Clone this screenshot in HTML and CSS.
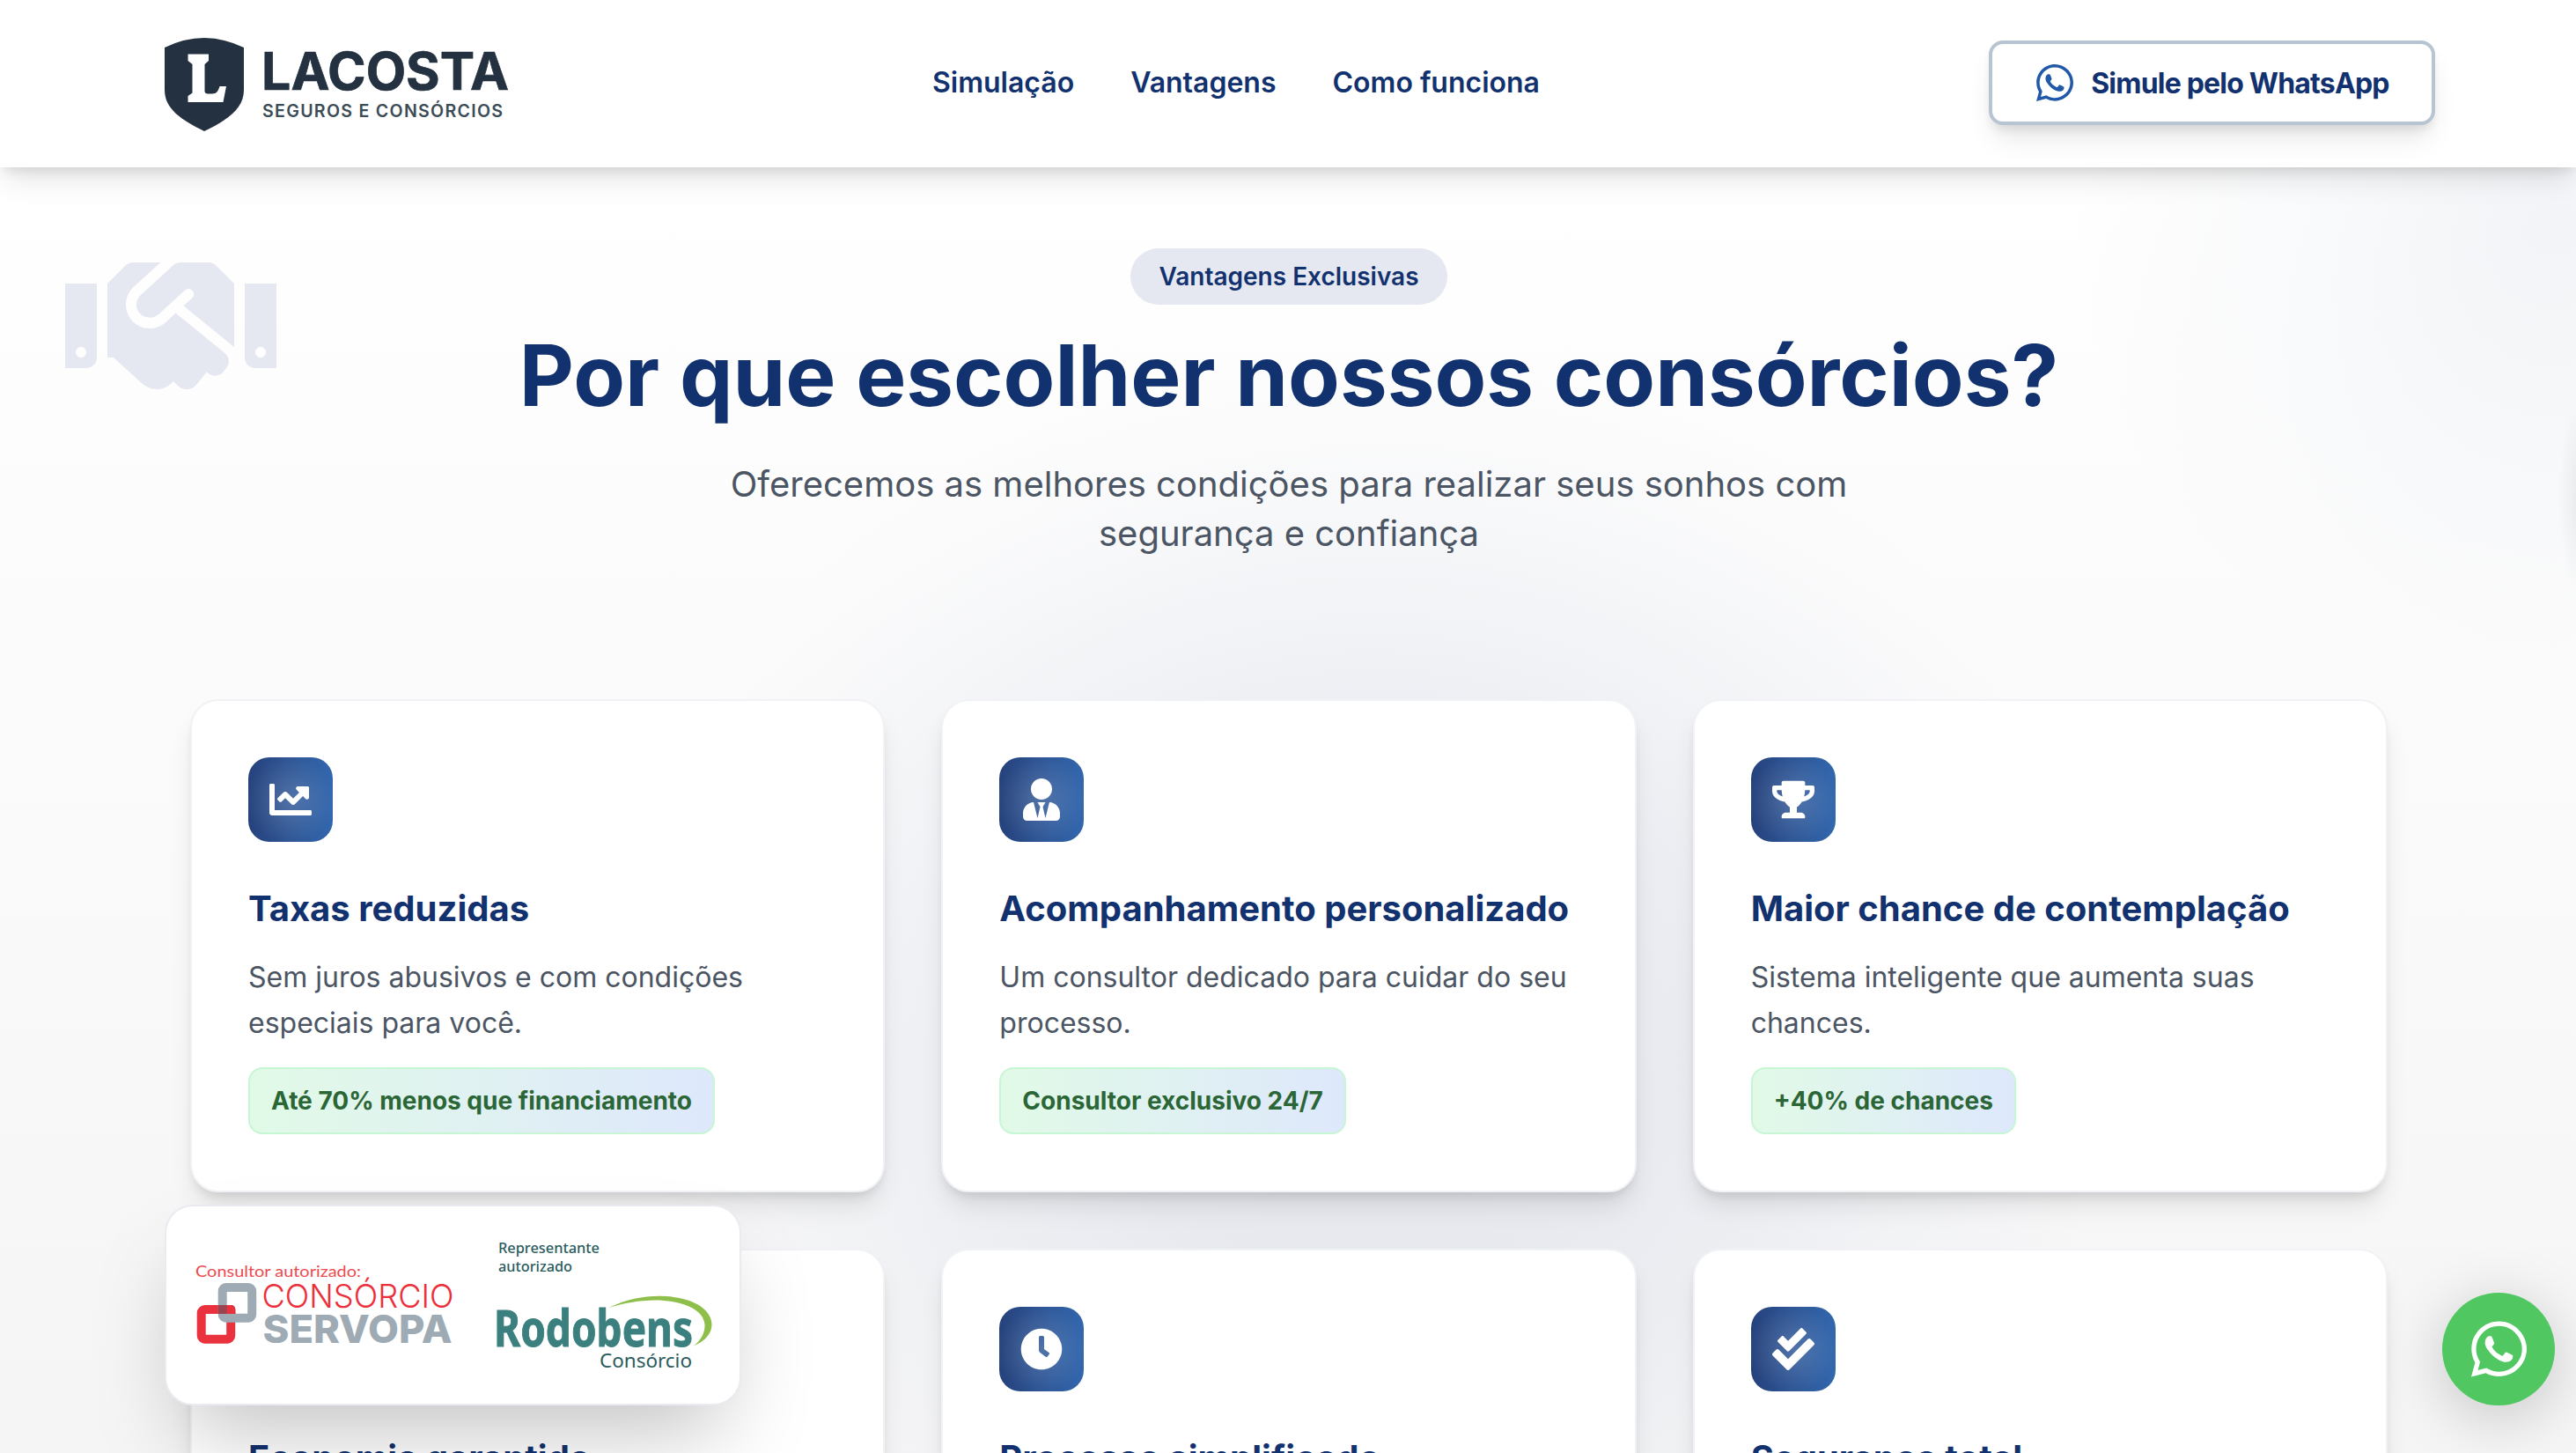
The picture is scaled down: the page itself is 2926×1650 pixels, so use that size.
FILE: index.html
```
<!DOCTYPE html>
<html lang="pt-BR">
<head>
<meta charset="utf-8">
<title>Lacosta Seguros e Consórcios</title>
<link rel="stylesheet" href="styles.css">
</head>
<body>
<svg class="sprite" aria-hidden="true">
  <symbol id="whatsapp" viewBox="0 0 448 512"><path d="M380.9 97.1C339 55.1 283.2 32 223.9 32c-122.4 0-222 99.6-222 222 0 39.1 10.2 77.3 29.6 111L0 480l117.7-30.9c32.4 17.7 68.9 27 106.1 27h.1c122.3 0 224.1-99.6 224.1-222 0-59.3-25.2-115-67.1-157zm-157 341.6c-33.2 0-65.7-8.9-94-25.7l-6.7-4-69.8 18.3L72 359.2l-4.4-7c-18.5-29.4-28.2-63.3-28.2-98.2 0-101.7 82.8-184.5 184.6-184.5 49.3 0 95.6 19.2 130.4 54.1 34.8 34.9 56.2 81.2 56.1 130.5 0 101.8-84.9 184.6-186.6 184.6zm101.2-138.2c-5.5-2.8-32.8-16.2-37.9-18-5.1-1.9-8.8-2.8-12.5 2.8-3.7 5.6-14.3 18-17.6 21.8-3.2 3.7-6.5 4.2-12 1.4-32.6-16.3-54-29.1-75.5-66-5.7-9.8 5.7-9.1 16.3-30.3 1.8-3.7.9-6.9-.5-9.7-1.4-2.8-12.5-30.1-17.1-41.2-4.5-10.8-9.1-9.3-12.5-9.5-3.2-.2-6.9-.2-10.6-.2-3.7 0-9.7 1.4-14.8 6.9-5.1 5.6-19.4 19-19.4 46.3 0 27.3 19.9 53.7 22.6 57.4 2.8 3.7 39.1 59.7 94.8 83.8 35.2 15.2 49 16.5 66.6 13.9 10.7-1.6 32.8-13.4 37.4-26.4 4.6-13 4.6-24.1 3.2-26.4-1.3-2.5-5-3.9-10.5-6.6z"/></symbol>
</svg>

<header class="header">
  <a class="logo">
    <svg class="logo-art" width="420" height="110" viewBox="160 40 420 110">
      <path d="M187 54Q232 32 277 54V102C277 124 258 136 232 149C206 136 187 124 187 102Z" fill="#233141"/>
      <path d="M213.500 61.500H237V69L232.500 73V103.500C232.500 105.500 234 106.500 236 106.500H241C246 106.500 248 103 249.500 98H257L253.500 116H213.500V109L218.500 105.500V73L213.500 69Z" fill="#fff"/>
      <text class="logo-name" x="297" y="101.700" textLength="281" lengthAdjust="spacingAndGlyphs">LACOSTA</text>
      <text class="logo-tag" x="298" y="132.600" textLength="273">SEGUROS E CONSÓRCIOS</text>
    </svg>
  </a>
  <nav class="nav"><a>Simulação</a><a>Vantagens</a><a>Como funciona</a></nav>
  <a class="cta"><svg width="42" height="48"><use href="#whatsapp"/></svg><span>Simule pelo WhatsApp</span></a>
</header>

<main class="section">
  <svg class="handshake" width="240" height="192" viewBox="0 0 640 512"><path d="M434.700 64h-85.900c-8 0-15.700 3-21.600 8.400l-98.300 90c-.1.1-.2.3-.3.4-16.600 15.600-16.300 40.500-2.100 56 12.700 13.900 39.400 17.600 56.100 2.700.1-.1.3-.1.4-.2l79.900-73.200c6.500-5.900 16.700-5.500 22.600 1 6 6.500 5.500 16.600-1 22.600l-26.100 23.900L504 313.800c2.900 2.400 5.500 5 7.900 7.700V128l-54.600-54.600c-5.900-6-14.100-9.400-22.600-9.400zM544 128.200v223.900c0 17.700 14.300 32 32 32h64V128.200h-96zm48 223.900c-8.800 0-16-7.200-16-16s7.200-16 16-16 16 7.200 16 16-7.200 16-16 16zM0 384h64c17.700 0 32-14.300 32-32V128.200H0V384zm48-63.900c8.800 0 16 7.200 16 16s-7.200 16-16 16-16-7.200-16-16c0-8.900 7.200-16 16-16zm435.900 18.600L334.600 217.500l-30 27.500c-29.700 27.100-75.200 24.500-101.700-4.400-26.900-29.400-24.800-74.900 4.400-101.700L289.100 64h-83.800c-8.500 0-16.600 3.400-22.600 9.400L128 128v223.900h18.300l90.500 81.900c27.400 22.300 67.700 18.100 90-9.300l.2-.2 17.900 15.500c15.900 13 39.400 10.500 52.300-5.400l31.400-38.600 5.400 4.400c13.700 11.100 33.900 9.100 45-4.700l9.500-11.700c11.200-13.800 9.100-33.900-4.600-45.100z"/></svg>

  <div class="intro">
    <span class="pill">Vantagens Exclusivas</span>
    <h1>Por que escolher nossos consórcios?</h1>
    <p>Oferecemos as melhores condições para realizar seus sonhos com segurança e confiança</p>
  </div>

  <div class="grid">
    <article class="card">
      <div class="icon"><svg viewBox="0 0 512 512"><path d="M496 384H64V80c0-8.840-7.160-16-16-16H16C7.160 64 0 71.160 0 80v336c0 17.670 14.330 32 32 32h464c8.840 0 16-7.160 16-16v-32c0-8.840-7.160-16-16-16zM464 96H345.940c-21.380 0-32.090 25.850-16.970 40.970l32.400 32.400L288 242.750l-73.370-73.370c-12.500-12.500-32.760-12.500-45.250 0l-68.690 68.690c-6.250 6.250-6.250 16.380 0 22.630l22.620 22.620c6.250 6.250 16.380 6.250 22.630 0L192 237.250l73.370 73.370c12.500 12.500 32.760 12.500 45.250 0l96-96 32.400 32.400c15.120 15.120 40.970 4.410 40.970-16.970V112c.01-8.840-7.150-16-15.990-16z"/></svg></div>
      <h2>Taxas reduzidas</h2>
      <p>Sem juros abusivos e com condições especiais para você.</p>
      <span class="tag">Até 70% menos que financiamento</span>
    </article>
    <article class="card">
      <div class="icon"><svg viewBox="0 0 448 512"><path d="M224 256c70.700 0 128-57.300 128-128S294.700 0 224 0 96 57.300 96 128s57.300 128 128 128zm95.800 32.600L272 480l-32-136 32-56h-96l32 56-32 136-47.800-191.400C56.900 292 0 350.300 0 422.400V464c0 26.500 21.500 48 48 48h352c26.500 0 48-21.500 48-48v-41.600c0-72.100-56.900-130.400-128.200-133.800z"/></svg></div>
      <h2>Acompanhamento personalizado</h2>
      <p>Um consultor dedicado para cuidar do seu processo.</p>
      <span class="tag">Consultor exclusivo 24/7</span>
    </article>
    <article class="card">
      <div class="icon"><svg viewBox="0 0 576 512"><path d="M552 64H448V24c0-13.300-10.700-24-24-24H152c-13.300 0-24 10.700-24 24v40H24C10.700 64 0 74.700 0 88v56c0 35.700 22.500 72.400 61.900 100.700 31.500 22.700 69.800 37.100 110 41.700C203.300 338.500 240 360 240 360v72h-48c-35.300 0-64 20.700-64 56v12c0 6.600 5.400 12 12 12h296c6.600 0 12-5.400 12-12v-12c0-35.300-28.700-56-64-56h-48v-72s36.700-21.500 68.100-73.600c40.300-4.600 78.600-19 110-41.700 39.300-28.300 61.900-65 61.900-100.700V88c0-13.300-10.700-24-24-24zM99.300 192.800C74.900 175.200 64 155.600 64 144v-16h64.200c1 32.600 5.800 61.200 12.800 86.200-15.100-5.200-29.200-12.400-41.700-21.400zM512 144c0 16.100-17.700 36.100-35.300 48.800-12.500 9-26.700 16.200-41.800 21.400 7-25 11.800-53.600 12.800-86.200H512v16z"/></svg></div>
      <h2>Maior chance de contemplação</h2>
      <p>Sistema inteligente que aumenta suas chances.</p>
      <span class="tag">+40% de chances</span>
    </article>
    <article class="card">
      <div class="icon"></div>
      <h2>Economia garantida</h2>
    </article>
    <article class="card">
      <div class="icon"><svg viewBox="0 0 512 512"><path d="M256,8C119,8,8,119,8,256S119,504,256,504,504,393,504,256,393,8,256,8Zm92.490,313h0l-20,25a16,16,0,0,1-22.490,2.500h0l-67-49.720a40,40,0,0,1-15-31.230V112a16,16,0,0,1,16-16h32a16,16,0,0,1,16,16V256l58,42.500A16,16,0,0,1,348.490,321Z"/></svg></div>
      <h2>Processo simplificado</h2>
    </article>
    <article class="card">
      <div class="icon"><svg viewBox="0 0 512 512"><path d="M505 174.800l-39.600-39.600c-9.400-9.400-24.600-9.400-33.900 0L192 374.700 80.600 263.200c-9.400-9.400-24.600-9.400-33.900 0L7 302.900c-9.400 9.400-9.400 24.600 0 34L175 505c9.400 9.400 24.600 9.400 33.900 0l296-296.200c9.400-9.500 9.400-24.700.1-34zm-324.300 106c6.200 6.300 16.400 6.300 22.600 0l208-208.200c6.200-6.300 6.200-16.400 0-22.600L366.100 4.700c-6.200-6.300-16.400-6.300-22.600 0L192 156.200l-55.400-55.500c-6.200-6.300-16.400-6.300-22.600 0L68.700 146c-6.200 6.300-6.200 16.400 0 22.600l112 112.200z"/></svg></div>
      <h2>Segurança total</h2>
    </article>
  </div>
</main>

<aside class="partners">
  <svg width="294" height="100" viewBox="222 1432 294 100">
    <text class="sv-note" x="222" y="1449.500" textLength="188" lengthAdjust="spacingAndGlyphs">Consultor autorizado:</text>
    <text class="sv-top" x="297.500" y="1485" textLength="218" lengthAdjust="spacingAndGlyphs">CONSÓRCIO</text>
    <text class="sv-name" x="298.500" y="1525" textLength="215" lengthAdjust="spacingAndGlyphs">SERVOPA</text>
    <rect x="228.700" y="1487" width="33.500" height="33.700" rx="4" fill="none" stroke="#e9323d" stroke-width="10"/>
    <rect x="252.700" y="1462" width="33.500" height="34.700" rx="4" fill="none" stroke="#9eabb4" stroke-width="10"/>
    <path d="M247.700 1482H262Q267.300 1482 267.300 1487.500V1492H247.700Z" fill="#9c4350"/>
    <path d="M257.700 1482H262Q267.300 1482 267.300 1487.500V1492H257.700Z" fill="#e9323d"/>
  </svg>
  <svg width="248" height="156" viewBox="563 1404 248 156">
    <text class="ro-note" x="566" y="1422.700" textLength="115" lengthAdjust="spacingAndGlyphs">Representante</text>
    <text class="ro-note" x="566" y="1443.700" textLength="84" lengthAdjust="spacingAndGlyphs">autorizado</text>
    <text class="ro-name" x="561" y="1529" textLength="226" lengthAdjust="spacingAndGlyphs">Rodobens</text>
    <text class="ro-sub" x="681" y="1553" textLength="105" lengthAdjust="spacingAndGlyphs">Consórcio</text>
    <path d="M691.500 1485C712 1475 732 1471.500 750 1471.700C782 1472 808 1484 808.500 1504C808.500 1515 800 1523 788 1528.500C796 1522 801 1514 800.500 1504C799 1486 773 1476.500 744 1476.500C726 1476.500 708 1480 691.500 1485Z" fill="#8fbf4b"/>
  </svg>
</aside>

<a class="float"><svg width="63" height="72"><use href="#whatsapp"/></svg></a>
</body>
</html>
```
FILE: styles.css
```
* { box-sizing: border-box; margin: 0; padding: 0; }

html { overflow: hidden; }

body {
  height: 1650px;
  overflow: hidden;
  position: relative;
  font-family: Inter, "Liberation Sans", sans-serif;
  color: #12316f;
  background: #fff;
}

svg { fill: currentColor; flex: none; }
.sprite { position: absolute; width: 0; height: 0; }

.header {
  position: relative;
  z-index: 5;
  height: 190px;
  padding: 0 160px 2px;
  display: flex;
  align-items: center;
  justify-content: space-between;
  background: #fff;
  box-shadow: 0 20px 30px -6px rgba(0, 0, 0, .1), 0 8px 12px -4px rgba(0, 0, 0, .1);
}
.logo { width: 389px; height: 108px; display: block; }
.logo-art { overflow: visible; display: block; }
.logo-name { font-size: 58.5px; font-weight: 700; fill: #233141; stroke: #233141; stroke-width: .7px; }
.logo-tag { font-size: 19.6px; font-weight: 600; fill: #3b4c57; }

.nav { display: flex; gap: 64px; font-size: 32px; line-height: 48px; font-weight: 600; }

.cta {
  width: 507px;
  height: 96px;
  padding-left: 2px;
  display: flex;
  align-items: center;
  justify-content: center;
  gap: 20px;
  border: 4px solid #b7c4d2;
  border-radius: 16px;
  background: #fff;
  font-size: 32px;
  font-weight: 700;
  letter-spacing: -.8px;
  box-shadow: 0 20px 30px -6px rgba(0, 0, 0, .1), 0 8px 12px -4px rgba(0, 0, 0, .1);
}
.cta svg { color: #2159a8; }

.section {
  position: relative;
  height: 1460px;
  overflow: hidden;
  padding: 92px 214px 0 216px;
  background:
    radial-gradient(ellipse 26px 110px at 2932px 375px, rgba(60, 70, 90, .09), transparent),
    radial-gradient(circle 560px at 2900px 60px, rgba(30, 65, 120, .055), rgba(30, 65, 120, .022) 50%, transparent),
    radial-gradient(ellipse 860px 760px at 1560px 960px, rgba(30, 60, 130, .085), rgba(30, 60, 130, .07) 40%, rgba(30, 60, 120, .022) 75%, transparent),
    linear-gradient(#fff, #f5f5f6);
}
.handshake { position: absolute; left: 74px; top: 84px; color: #e5e8f0; }

.intro { display: flex; flex-direction: column; align-items: center; text-align: center; margin-bottom: 160px; }
.pill {
  padding: 12px 32px;
  border-radius: 32px;
  background: #e5e8f0;
  font-size: 28px;
  line-height: 40px;
  font-weight: 600;
}
.intro h1 { margin: 32px 0 48px; font-size: 96px; line-height: 96px; font-weight: 700; }
.intro p { max-width: 1344px; font-size: 40px; line-height: 56px; color: #4b5563; }

.grid { display: grid; grid-template-columns: repeat(3, 1fr); grid-auto-rows: 560px; gap: 64px; }
.card {
  padding: 64px;
  border: 2px solid #f1f2f5;
  border-radius: 32px;
  background: #fff;
  box-shadow: 0 20px 30px -6px rgba(0, 0, 0, .1), 0 8px 12px -4px rgba(0, 0, 0, .1);
}
.icon {
  width: 96px;
  height: 96px;
  margin-bottom: 48px;
  display: flex;
  align-items: center;
  justify-content: center;
  border-radius: 24px;
  color: #fff;
  background:
    radial-gradient(circle, rgba(255, 255, 255, .2), rgba(255, 255, 255, .03) 75%),
    linear-gradient(to right, #1f3c78, #2c62ab);
}
.icon svg { width: 48px; height: 48px; }
.card h2 { font-size: 40px; line-height: 56px; font-weight: 700; margin-bottom: 24px; white-space: nowrap; }
.card p { font-size: 32px; line-height: 52px; color: #4b5563; margin-bottom: 24px; }
.tag {
  display: inline-block;
  padding: 16px 24px;
  border: 2px solid #c6f6d3;
  border-radius: 16px;
  background: linear-gradient(to right, #e1fae7, #dee8fc);
  font-size: 28px;
  line-height: 40px;
  font-weight: 700;
  color: #2b6636;
}

/* Partner badge pinned to the lower left of the viewport */
.partners {
  position: absolute;
  z-index: 6;
  left: 187px;
  top: 1368px;
  width: 655px;
  height: 228px;
  padding-left: 33px;
  display: flex;
  align-items: center;
  gap: 47px;
  border: 2px solid #e9ebf0;
  border-radius: 32px;
  background: #fff;
  box-shadow: 0 50px 100px -24px rgba(0, 0, 0, .25);
}
.partners svg { overflow: visible; }
.sv-note { font-family: Lato, sans-serif; font-size: 17px; fill: #ee4a50; }
.sv-top { font-size: 37px; font-weight: 300; fill: #ec2f3b; }
.sv-name { font-size: 44.5px; font-weight: 800; fill: #9eabb4; }
.ro-note { font-family: "Noto Sans", sans-serif; font-size: 16.8px; font-weight: 500; fill: #2a5c60; }
.ro-name { font-family: "Noto Sans", sans-serif; font-size: 57px; font-weight: 700; fill: #3b807f; stroke: #3b807f; stroke-width: 1px; }
.ro-sub { font-family: "Noto Sans", sans-serif; font-size: 22.5px; fill: #2a5c60; }

/* Floating chat button */
.float {
  position: absolute;
  z-index: 6;
  right: 24px;
  top: 1468px;
  width: 128px;
  height: 128px;
  display: flex;
  align-items: center;
  justify-content: center;
  border-radius: 50%;
  background: #50c761;
  color: #fff;
  box-shadow: 0 12px 70px rgba(0, 0, 0, .2);
}
```
